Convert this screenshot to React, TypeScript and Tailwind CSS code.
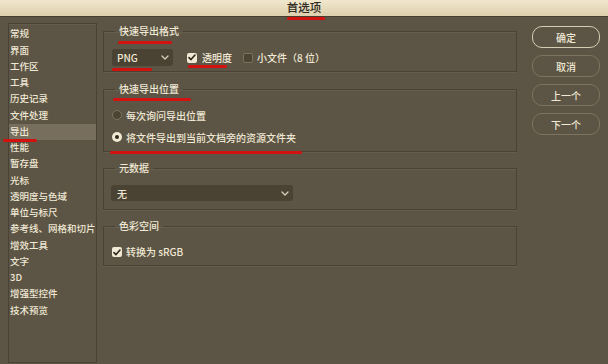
import React from "react";

const font = { fontFamily: '"Noto Sans CJK SC", "Noto Sans", sans-serif' };

const navItems = [
  "常规",
  "界面",
  "工作区",
  "工具",
  "历史记录",
  "文件处理",
  "导出",
  "性能",
  "暂存盘",
  "光标",
  "透明度与色域",
  "单位与标尺",
  "参考线、网格和切片",
  "增效工具",
  "文字",
  "3D",
  "增强型控件",
  "技术预览",
];

function Chevron() {
  return (
    <svg width="8" height="5" viewBox="0 0 8 5" fill="none">
      <path d="M1 1l3 3 3-3" stroke="#d8d0bc" strokeWidth="1.3" strokeLinecap="round" strokeLinejoin="round" />
    </svg>
  );
}

function CheckBox({ checked }: { checked: boolean }) {
  return checked ? (
    <span className="flex h-[10px] w-[10px] items-center justify-center rounded-[2px] bg-[#f1e9d3]">
      <svg width="8" height="7" viewBox="0 0 8 7" fill="none">
        <path d="M1 3.6l2 2L7 1" stroke="#2e271c" strokeWidth="1.6" strokeLinecap="round" strokeLinejoin="round" />
      </svg>
    </span>
  ) : (
    <span className="h-[10px] w-[10px] rounded-[2px] border border-[#7c735f] bg-[#4c4435]" />
  );
}

function Radio({ on }: { on: boolean }) {
  return on ? (
    <span className="flex h-[10px] w-[10px] items-center justify-center rounded-full bg-[#f1e9d3]">
      <span className="h-[4px] w-[4px] rounded-full bg-[#2e271c]" />
    </span>
  ) : (
    <span className="h-[10px] w-[10px] rounded-full border border-[#7c735f] bg-[#4c4435]" />
  );
}

function Group({ title, children, className }: { title: string; children: React.ReactNode; className?: string }) {
  return (
    <fieldset className={"border border-[#4a4234] shadow-[inset_0_1px_0_rgba(255,255,255,0.06),0_1px_0_rgba(255,255,255,0.05)] " + (className ?? "")}>
      <legend className="ml-[11px] px-[4px] text-[10px] leading-[14px] font-medium text-[#efe8d5]">{title}</legend>
      {children}
    </fieldset>
  );
}

function Btn({ label, primary }: { label: string; primary?: boolean }) {
  return (
    <div
      className={
        "flex h-[22px] w-[68px] items-center justify-center rounded-[10px] border text-[10px] font-medium text-[#efe8d5] " +
        (primary ? "border-[#d6ccb3]" : "border-[#7d745f]")
      }
    >
      {label}
    </div>
  );
}

function Mark({ x1, x2, y }: { x1: number; x2: number; y: number }) {
  return (
    <div
      className="absolute h-[3px] rounded-full bg-[#d3120f]"
      style={{ left: x1, width: x2 - x1, top: y - 1 }}
    />
  );
}

export default function App() {
  return (
    <div className="relative h-[364px] w-[608px] overflow-hidden bg-[#5c5444] text-[#efe8d5]" style={font}>
      {/* Title bar */}
      <div className="flex h-[17px] items-center justify-center border-b border-[#463e30] bg-gradient-to-b from-[#f1e7cd] to-[#dccfae] text-[11.5px] font-medium text-[#2f2a22]">
        首选项
      </div>

      <div className="flex">
        {/* Sidebar */}
        <div className="ml-[8px] mt-[6px] h-[340px] w-[89px] border border-[#4a4234] pt-[2px] shadow-[inset_0_1px_0_rgba(255,255,255,0.05)]">
          {navItems.map((t) => (
            <div
              key={t}
              className={
                "flex h-[16.25px] items-center whitespace-nowrap pl-[1px] text-[9.5px] font-medium leading-none text-[#efe8d5] " +
                (t === "导出" ? "bg-[#776e5d]" : "")
              }
            >
              {t}
            </div>
          ))}
        </div>

        {/* Main */}
        <div className="ml-[6px] mt-[7px] flex w-[414px] flex-col gap-[10px]">
          <Group title="快速导出格式">
            <div className="flex items-center pl-[8px] pb-[5px] pt-[11px]">
              <div className="flex h-[17px] w-[61px] items-center justify-between rounded-[3px] bg-[#4a4233] pl-[5px] pr-[4px] text-[10px] font-medium">
                <span>PNG</span>
                <Chevron />
              </div>
              <div className="ml-[14px] flex items-center gap-[5px] text-[10px] font-medium">
                <CheckBox checked />
                <span>透明度</span>
              </div>
              <div className="ml-[11px] flex items-center gap-[4px] text-[10px] font-medium">
                <CheckBox checked={false} />
                <span>小文件（8 位）</span>
              </div>
            </div>
          </Group>

          <Group title="快速导出位置">
            <div className="flex flex-col gap-[8px] pl-[8px] pb-[7px] pt-[12px]">
              <div className="flex h-[14px] items-center gap-[4px] text-[10px] font-medium">
                <Radio on={false} />
                <span>每次询问导出位置</span>
              </div>
              <div className="flex h-[14px] items-center gap-[4px] text-[10px] font-medium">
                <Radio on />
                <span>将文件导出到当前文档旁的资源文件夹</span>
              </div>
            </div>
          </Group>

          <Group title="元数据" className="-mt-[1px]">
            <div className="pl-[7px] pb-[8px] pt-[10px]">
              <div className="flex h-[16px] w-[182px] items-center justify-between rounded-[3px] bg-[#4a4233] pl-[6px] pr-[4px] text-[10px] font-medium">
                <span>无</span>
                <Chevron />
              </div>
            </div>
          </Group>

          <Group title="色彩空间" className="-mt-[1px]">
            <div className="flex items-center gap-[4px] pl-[8px] pb-[6px] pt-[12px] text-[10px] font-medium">
              <CheckBox checked />
              <span className="leading-[14px]">转换为 sRGB</span>
            </div>
          </Group>
        </div>

        {/* Buttons */}
        <div className="ml-[15px] mt-[9px] flex flex-col gap-[7px]">
          <Btn label="确定" primary />
          <Btn label="取消" />
          <Btn label="上一个" />
          <Btn label="下一个" />
        </div>
      </div>

      {/* Red annotation marks */}
      <Mark x1={287} x2={325} y={18} />
      <Mark x1={3} x2={37} y={140} />
      <Mark x1={118} x2={172} y={42} />
      <Mark x1={112} x2={152} y={69} />
      <Mark x1={188} x2={227} y={66} />
      <Mark x1={113} x2={191} y={99} />
      <Mark x1={110} x2={302} y={152} />
    </div>
  );
}
